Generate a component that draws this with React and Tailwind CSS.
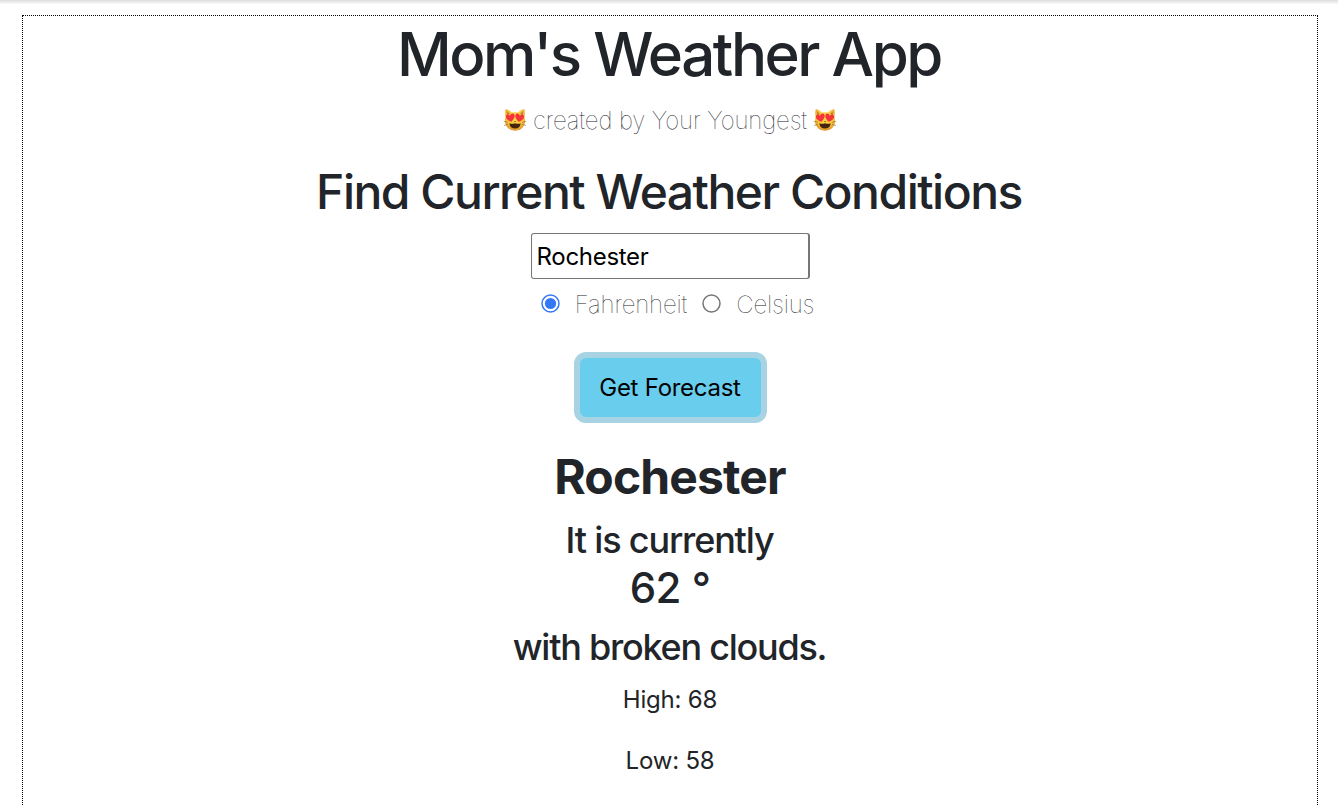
function Heart() {
  return (
    <path d="M0 4 C-4 1.500 -5.200 -1 -4 -3 C-3 -4.300 -.9 -4 0 -2.200 C.9 -4 3 -4.300 4 -3 C5.200 -1 4 1.500 0 4Z" />
  );
}

function CatFace() {
  return (
    <svg viewBox="0 0 24 24" className="h-6 w-6 shrink-0" aria-hidden="true">
      <defs>
        <radialGradient id="fur" cx="50%" cy="35%" r="65%">
          <stop offset="0" stopColor="#ffdc4a" />
          <stop offset=".65" stopColor="#fcc63a" />
          <stop offset="1" stopColor="#dc922c" />
        </radialGradient>
      </defs>
      <path d="M2.700 1.300 Q5 1 9 4.500 Q12 3.900 15 4.500 Q19 1 21.300 1.300 Q22.300 5 21.500 9.500 Q23 13.500 21 17.500 Q18 22.700 12 22.700 Q6 22.700 3 17.500 Q1 13.500 2.500 9.500 Q1.700 5 2.700 1.300Z" fill="url(#fur)" />
      <path d="M3.700 3 L7 5.500 L4 8Z M20.300 3 L17 5.500 L20 8Z" fill="#c98635" />
      <path d="M.7 13.300 L5 14.200 M1 17.500 L5 16.200 M23.300 13.300 L19 14.200 M23 17.500 L19 16.200" stroke="#8f6a38" strokeWidth=".6" />
      <g fill="#f5353c">
        <g transform="translate(7.600 9.800) rotate(-12)"><Heart /></g>
        <g transform="translate(16.400 9.800) rotate(12)"><Heart /></g>
      </g>
      <path d="M10.800 13 H13.200 L12 14.300Z" fill="#9a5a20" />
      <path d="M6.300 15.300 Q9 16.400 12 15.300 Q15 16.400 17.700 15.300 Q17 20.600 12 20.600 Q7 20.600 6.300 15.300Z" fill="#442510" />
    </svg>
  );
}

function Radio({ label, checked }) {
  return (
    <label className="flex items-center">
      <svg viewBox="0 0 19 19" className="mr-[15px] mb-1 size-[19px]" aria-hidden="true">
        <circle cx="9.500" cy="9.500" r="8.500" fill="none" stroke={checked ? "#3478f6" : "#767676"} strokeWidth="1.500" />
        {checked && <circle cx="9.500" cy="9.500" r="5.600" fill="#3478f6" />}
      </svg>
      {label}
    </label>
  );
}

export default function App() {
  return (
    <div className="h-[806px] overflow-hidden bg-white font-['Inter',sans-serif] text-[#212529]">
      <div className="h-[15px] bg-linear-to-b from-[#dcdcdc] via-white via-30% to-white" />
      <main className="mr-5 ml-[22px] flex h-[900px] flex-col items-center border border-dotted border-black pt-0.5">
        <h1 className="pr-0.5 text-[60px] leading-[72px] font-medium tracking-[-2.45px]">Mom's Weather App</h1>
        <p className="mt-[13px] flex items-center gap-[6px] text-[24px] leading-9 font-thin tracking-[-0.12px]">
          <span className="pb-0.5"><CatFace /></span>
          <span>created by Your Youngest</span>
          <span className="pb-0.5"><CatFace /></span>
        </p>
        <h2 className="mt-6 pr-0.5 text-[48px] leading-[58px] font-medium tracking-[-1.5px]">Find Current Weather Conditions</h2>
        <input
          defaultValue="Rochester"
          className="mt-3 h-[46px] w-[279px] shrink-0 rounded-[3px] border border-r-2 border-[#767676] px-[5px] text-[24px] tracking-[-0.3px] text-black outline-none"
        />
        <div className="mt-2 ml-[15px] flex h-9 items-center gap-[15px] text-[24px] leading-9 font-thin tracking-[-0.15px]">
          <Radio label="Fahrenheit" checked />
          <Radio label="Celsius" />
        </div>
        <button className="mt-[29px] h-[71px] w-[193px] shrink-0 rounded-[12px] border-[6px] border-[#a7d3e3] bg-[#69ceee] text-[24px] tracking-[-0.27px] text-black">
          Get Forecast
        </button>
        <h2 className="mt-[25px] text-[48px] leading-[58px] font-bold tracking-[-0.85px]">Rochester</h2>
        <h3 className="mt-[13px] pr-px text-[36px] leading-[43px] font-medium tracking-[-1.17px]">It is currently</h3>
        <h3 className="mt-px text-[42px] leading-[50px] font-medium tracking-[-0.5px]">62 °</h3>
        <h3 className="mt-[13px] pr-px text-[36px] leading-[43px] font-medium tracking-[-1.25px]">with broken clouds.</h3>
        <p className="mt-[13px] text-[24px] leading-9 tracking-[-0.2px]">High: 68</p>
        <p className="mt-[25px] text-[24px] leading-9 tracking-[-0.2px]">Low: 58</p>
      </main>
    </div>
  );
}
